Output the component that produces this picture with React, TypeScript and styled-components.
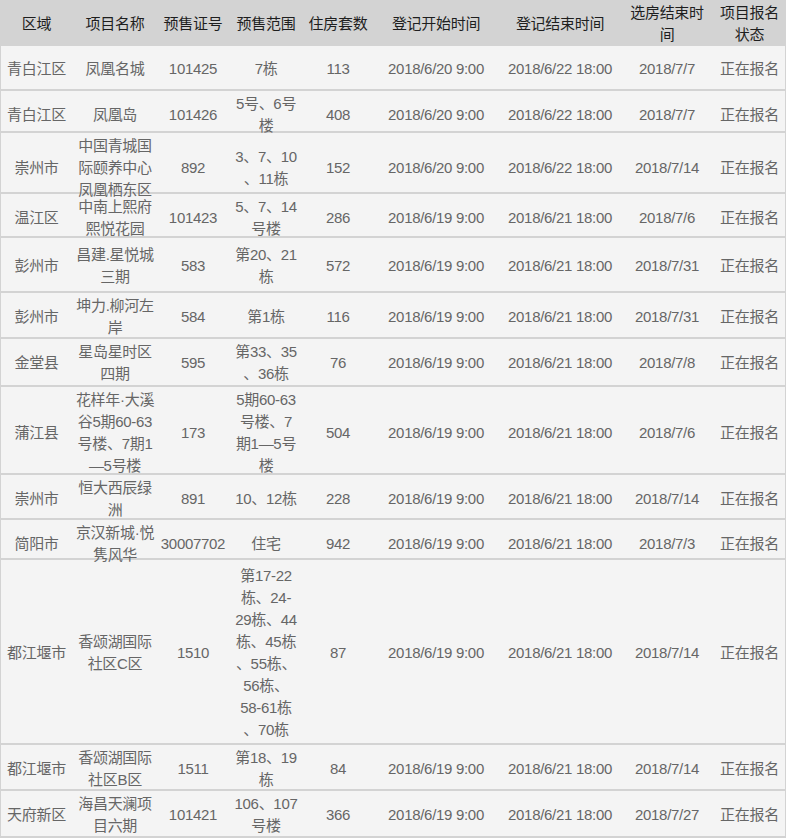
import React from "react";
import styled, { createGlobalStyle } from "styled-components";

const Global = createGlobalStyle`
  html, body { margin: 0; padding: 0; background: #ffffff; }
  body { font-family: "Liberation Sans", "Noto Sans CJK SC", sans-serif; }
`;

const COLS = "71px 86px 70px 76px 68px 128px 120px 94px 71px";

const Table = styled.div`
  width: 786px;
  display: block;
  font-family: "Liberation Sans", "Noto Sans CJK SC", sans-serif;
  font-size: 15px;
  letter-spacing: -0.3px;
`;

const HeadRow = styled.div`
  display: grid;
  grid-template-columns: ${COLS};
  height: 46px;
  background: #d3d3d3;
  border-left: 1px solid #d3d3d3;
  border-right: 1px solid #d3d3d3;
  color: #1e1e1e;
`;

const BodyRow = styled.div<{ $h: number }>`
  display: grid;
  grid-template-columns: ${COLS};
  height: ${(p) => p.$h}px;
  background: #f4f4f4;
  border-left: 1px solid #d3d3d3;
  border-right: 1px solid #d3d3d3;
  border-bottom: 2px solid #d3d3d3;
  color: #666666;
`;

const Cell = styled.div`
  display: flex;
  flex-direction: column;
  align-items: center;
  justify-content: center;
  text-align: center;
  line-height: 22px;
  white-space: nowrap;
  overflow: visible;
  min-width: 0;
  padding-top: 2px;
`;

const Line = styled.span`
  display: block;
`;

type CellVal = string | string[];

const header: CellVal[] = [
  "区域",
  "项目名称",
  "预售证号",
  "预售范围",
  "住房套数",
  "登记开始时间",
  "登记结束时间",
  ["选房结束时", "间"],
  ["项目报名", "状态"],
];

const A1 = "2018/6/20 9:00";
const B1 = "2018/6/22 18:00";
const A2 = "2018/6/19 9:00";
const B2 = "2018/6/21 18:00";
const S = "正在报名";

const rows: { h: number; cells: CellVal[] }[] = [
  { h: 43, cells: ["青白江区", "凤凰名城", "101425", "7栋", "113", A1, B1, "2018/7/7", S] },
  { h: 40, cells: ["青白江区", "凤凰岛", "101426", ["5号、6号", "楼"], "408", A1, B1, "2018/7/7", S] },
  {
    h: 59,
    cells: ["崇州市", ["中国青城国", "际颐养中心", "凤凰栖东区"], "892", ["3、7、10", "、11栋"], "152", A1, B1, "2018/7/14", S],
  },
  { h: 42, cells: ["温江区", ["中南上熙府", "熙悦花园"], "101423", ["5、7、14", "号楼"], "286", A2, B2, "2018/7/6", S] },
  { h: 53, cells: ["彭州市", ["昌建.星悦城", "三期"], "583", ["第20、21", "栋"], "572", A2, B2, "2018/7/31", S] },
  { h: 44, cells: ["彭州市", ["坤力.柳河左", "岸"], "584", "第1栋", "116", A2, B2, "2018/7/31", S] },
  { h: 46, cells: ["金堂县", ["星岛星时区", "四期"], "595", ["第33、35", "、36栋"], "76", A2, B2, "2018/7/8", S] },
  {
    h: 86,
    cells: [
      "蒲江县",
      ["花样年·大溪", "谷5期60-63", "号楼、7期1", "—5号楼"],
      "173",
      ["5期60-63", "号楼、7", "期1—5号", "楼"],
      "504",
      A2,
      B2,
      "2018/7/6",
      S,
    ],
  },
  { h: 43, cells: ["崇州市", ["恒大西辰绿", "洲"], "891", "10、12栋", "228", A2, B2, "2018/7/14", S] },
  { h: 38, cells: ["简阳市", ["京汉新城·悦", "隽风华"], "30007702", "住宅", "942", A2, B2, "2018/7/3", S] },
  {
    h: 183,
    cells: [
      "都江堰市",
      ["香颂湖国际", "社区C区"],
      "1510",
      ["第17-22", "栋、24-", "29栋、44", "栋、45栋", "、55栋、", "56栋、", "58-61栋", "、70栋"],
      "87",
      A2,
      B2,
      "2018/7/14",
      S,
    ],
  },
  { h: 44, cells: ["都江堰市", ["香颂湖国际", "社区B区"], "1511", ["第18、19", "栋"], "84", A2, B2, "2018/7/14", S] },
  { h: 45, cells: ["天府新区", ["海昌天澜项", "目六期"], "101421", ["106、107", "号楼"], "366", A2, B2, "2018/7/27", S] },
];

const renderCell = (v: CellVal, i: number) => (
  <Cell key={i}>
    {Array.isArray(v) ? v.map((l, j) => <Line key={j}>{l}</Line>) : v}
  </Cell>
);

export default function App() {
  return (
    <>
      <Global />
      <Table>
        <HeadRow>{header.map(renderCell)}</HeadRow>
        {rows.map((r, i) => (
          <BodyRow key={i} $h={r.h}>
            {r.cells.map(renderCell)}
          </BodyRow>
        ))}
      </Table>
    </>
  );
}
